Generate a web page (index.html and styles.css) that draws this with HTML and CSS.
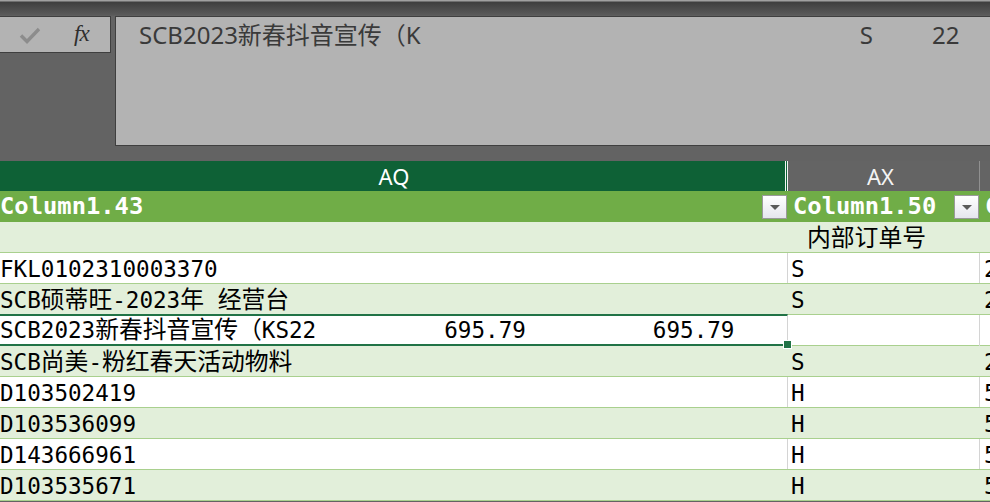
FILE: index.html
```html
<!DOCTYPE html>
<html lang="zh">
<head>
<meta charset="utf-8">
<title>Sheet</title>
<link rel="stylesheet" href="styles.css">
</head>
<body>
<div class="app">
  <div class="topbar"></div>
  <div class="formula-row">
    <div class="fx-box">
      <svg class="check" width="22" height="18" viewBox="0 0 22 18"><path d="M2 9.5 L8 15.5 L20 3" fill="none" stroke="#8c8c8c" stroke-width="3.4"/></svg>
      <span class="fx">fx</span>
    </div>
    <div class="formula-input">
      <span class="f-main">SCB2023新春抖音宣传（K</span>
      <span class="f-s">S</span>
      <span class="f-22">22</span>
    </div>
  </div>
  <div class="band"></div>
  <div class="sheet">
    <div class="row colhead">
      <div class="cell ch-aq">AQ</div>
      <div class="cell ch-ax">AX</div>
      <div class="cell ch-next"></div>
    </div>
    <div class="row tablehead">
      <div class="cell th"><span>Column1.43</span><span class="dd"></span></div>
      <div class="cell th th2"><span>Column1.50</span><span class="dd"></span></div>
      <div class="cell th th3"><span>C</span></div>
    </div>
    <div class="row tint">
      <div class="cell"></div>
      <div class="cell label"><span class="cj">内部订单号</span></div>
      <div class="cell"></div>
    </div>
    <div class="row plain">
      <div class="cell">FKL0102310003370</div>
      <div class="cell c2">S</div>
      <div class="cell c3">2</div>
    </div>
    <div class="row tint">
      <div class="cell">SCB<span class="cj">硕蒂旺</span>-2023<span class="cj">年</span> <span class="cj">经营台</span></div>
      <div class="cell c2">S</div>
      <div class="cell c3">2</div>
    </div>
    <div class="row plain selected-row">
      <div class="cell selected"><span>SCB2023<span class="cj">新春抖音宣传（</span>KS22</span><span class="n1">695.79</span><span class="n2">695.79</span><i class="handle"></i></div>
      <div class="cell c2"></div>
      <div class="cell c3"></div>
    </div>
    <div class="row tint">
      <div class="cell">SCB<span class="cj">尚美</span>-<span class="cj">粉红春天活动物料</span></div>
      <div class="cell c2">S</div>
      <div class="cell c3">2</div>
    </div>
    <div class="row plain">
      <div class="cell">D103502419</div>
      <div class="cell c2">H</div>
      <div class="cell c3">5</div>
    </div>
    <div class="row tint">
      <div class="cell">D103536099</div>
      <div class="cell c2">H</div>
      <div class="cell c3">5</div>
    </div>
    <div class="row plain">
      <div class="cell">D143666961</div>
      <div class="cell c2">H</div>
      <div class="cell c3">5</div>
    </div>
    <div class="row tint">
      <div class="cell">D103535671</div>
      <div class="cell c2">H</div>
      <div class="cell c3">5</div>
    </div>
  </div>
</div>
</body>
</html>
```

FILE: styles.css
```css
html, body {
  margin: 0;
  padding: 0;
  background: #636363;
}
.app {
  width: 990px;
  height: 502px;
  overflow: hidden;
  background: #636363;
}
.topbar {
  height: 16px;
  background: linear-gradient(#a0a0a0 0, #a0a0a0 1px, #3e3e3e 2px, #5a5a5a 15px, #616161 16px);
}
.formula-row {
  display: flex;
  gap: 4px;
  height: 130px;
  align-items: flex-start;
}
.fx-box {
  width: 110px;
  height: 35px;
  background: #b3b3b3;
  border: 1px solid #3f3f3f;
  border-left: none;
  display: flex;
  align-items: center;
  box-sizing: content-box;
}
.check {
  margin-left: 19px;
  margin-top: 1px;
}
.fx {
  margin-left: 33px;
  font-family: "Liberation Serif", serif;
  font-style: italic;
  font-size: 23px;
  color: #2e2e2e;
  letter-spacing: -1px;
  margin-top: -2px;
}
.formula-input {
  flex: 1;
  height: 128px;
  background: #b3b3b3;
  border: 1px solid #3f3f3f;
  border-right: none;
  display: flex;
  align-items: flex-start;
  font-family: "Noto Sans", "Noto Sans CJK SC", sans-serif;
  font-size: 24px;
  color: #3a3a3a;
  line-height: 36px;
}
.f-main {
  margin-left: 23px;
}
.f-s {
  margin-left: 439px;
}
.f-22 {
  margin-left: 59px;
}
.band {
  height: 15px;
}
.sheet {
  font-family: "DejaVu Sans Mono", "Noto Sans CJK SC", monospace;
  font-size: 22.6px;
  color: #000;
}
.cj {
  font-family: "Noto Sans CJK SC", sans-serif;
  font-size: 23.8px;
  line-height: 1;
}
.row {
  display: grid;
  grid-template-columns: 788px 192px 60px;
  height: 31px;
  box-sizing: border-box;
}
.cell {
  position: relative;
  white-space: nowrap;
  overflow: hidden;
  line-height: 31px;
  padding-top: 1px;
  box-sizing: border-box;
}
.colhead {
  height: 30px;
}
.colhead .cell {
  font-family: "Noto Sans", sans-serif;
  font-size: 22px;
  line-height: 30px;
  padding-top: 0;
  text-align: center;
}
.ch-aq {
  background: #0e6136;
  color: #ffffff;
  border-right: 3px double #f2f2f2;
  padding-left: 3px;
}
.ch-ax {
  background: #646464;
  color: #f4f4f4;
  border-right: 1px solid #909090;
  padding-right: 6px;
}
.ch-next {
  background: #646464;
}
.tablehead {
  background: #70ad47;
  height: 31px;
}
.th {
  display: flex;
  align-items: center;
  justify-content: space-between;
  color: #ffffff;
  font-weight: bold;
  font-size: 23.8px;
  padding-top: 0;
}
.th2 {
  padding-left: 5px;
  padding-right: 1px;
}
.th3 {
  padding-left: 5px;
}
.dd {
  width: 23px;
  height: 22px;
  border: 1px solid #9a9a9a;
  background: linear-gradient(#ffffff, #e6e6ee);
  position: relative;
  flex: none;
  margin-right: 1px;
}
.dd::after {
  content: "";
  position: absolute;
  left: 7px;
  top: 9px;
  border-left: 5px solid transparent;
  border-right: 5px solid transparent;
  border-top: 5px solid #5a5a5a;
}
.th2 .dd {
  margin-right: 0;
}
.tint {
  background: #e2efda;
  border-bottom: 1px solid #a9d08e;
}
.plain {
  background: #ffffff;
  border-bottom: 1px solid #a9d08e;
}
.plain .cell:first-child {
  border-right: 1px solid #d4d4d4;
}
.plain .c2 {
  border-right: 1px solid #d4d4d4;
}
.tint .cell:first-child {
  border-right: 1px solid transparent;
}
.tint .c2 {
  border-right: 1px solid transparent;
}
.label {
  padding-left: 19px;
}
.c2 {
  padding-left: 3px;
}
.c3 {
  padding-left: 4px;
}
.cell.selected {
  overflow: visible;
  border-top: 2px solid #217346;
  border-bottom: 2px solid #217346;
  border-right: 2px solid #217346;
  margin-top: -1px;
  height: 32px;
  padding-top: 0;
  line-height: 29px;
}
.n1 {
  margin-left: 128px;
}
.n2 {
  margin-left: 127px;
}
.handle {
  position: absolute;
  right: -5px;
  bottom: -5px;
  width: 7px;
  height: 7px;
  background: #217346;
  border: 1px solid #ffffff;
}
```
